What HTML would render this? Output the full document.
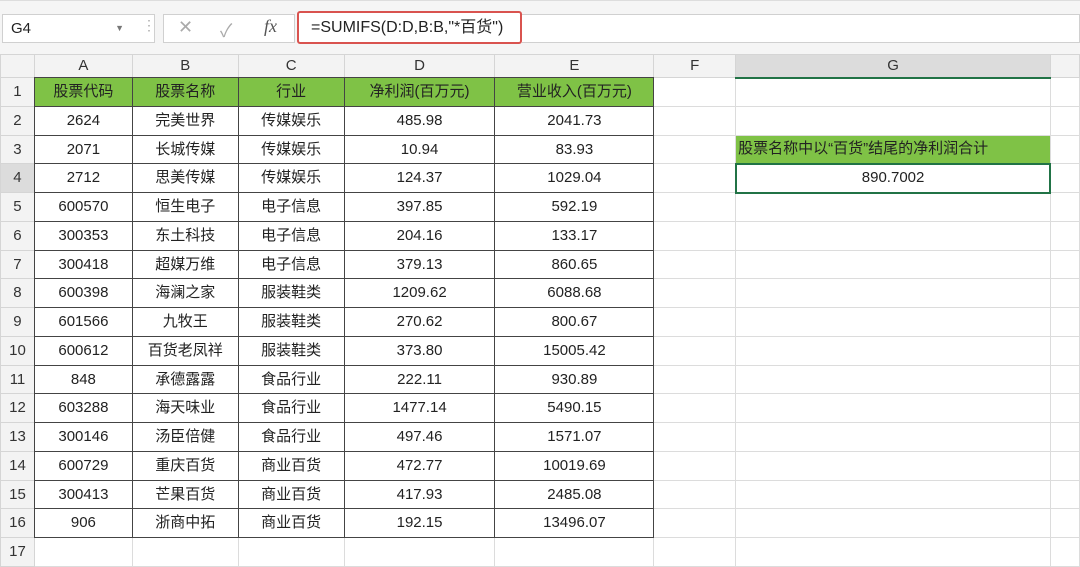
<!DOCTYPE html>
<html><head><meta charset="utf-8"><style>
body{margin:0;width:1080px;height:552px;overflow:hidden;background:#fff;font-family:"Liberation Sans","Noto Sans CJK SC",sans-serif;color:#222;position:relative}
.top{position:absolute;left:0;top:0;width:1080px;height:54px;background:#f5f5f5;border-top:1px solid #ddd}
.nb{position:absolute;left:2px;top:13px;width:153px;height:29px;background:#fff;border:1px solid #d0d0d0;box-sizing:border-box;font-size:15px;line-height:27px;padding-left:8px}
.nb span{position:absolute;right:30px;top:0;font-size:9px;color:#777}
.fxa{position:absolute;left:163px;top:13px;width:132px;height:29px;background:#fff;border:1px solid #d0d0d0;box-sizing:border-box;color:#aaa;font-size:18px}
.fb{position:absolute;left:297px;top:10px;width:225px;height:33px;background:#fff;border:2px solid #d9534f;border-radius:3px;box-sizing:border-box;font-size:16px;line-height:29px;padding-left:12px}
.rest{position:absolute;left:522px;top:13px;width:558px;height:29px;background:#fff;border:1px solid #d0d0d0;border-left:none;box-sizing:border-box}
table{position:absolute;left:0;top:54px;border-collapse:collapse;table-layout:fixed;font-size:15px}
td{border:1px solid #dcdcdc;text-align:center;padding:0;white-space:nowrap;overflow:hidden;line-height:18px}
tr{height:29px}
tr.s{height:28px}
tr.h{height:23px}
tr.h td{background:#f3f3f3;color:#333;font-size:15px;border-color:#d5d5d5}
td.r{background:#f3f3f3;color:#333;border-color:#d5d5d5}
td.d{border:1px double #444}
.g{background:#7fc246}
</style></head><body>
<div class="top">
<div class="nb">G4<span>▼</span></div>
<div style="position:absolute;left:142px;top:16px;color:#aaa;font-size:14px">⋮</div>
<div class="fxa"><span style="position:absolute;left:14px;top:2px">✕</span><span style="position:absolute;left:56px;top:2px">✓</span><span style="position:absolute;left:100px;top:1px;font-family:'Liberation Serif',serif;font-style:italic;color:#555">fx</span></div>
<div class="fb">=SUMIFS(D:D,B:B,"*百货")</div>
<div class="rest"></div>
</div>
<table>
<colgroup><col style="width:34px"><col style="width:98px"><col style="width:106px"><col style="width:106px"><col style="width:151px"><col style="width:159px"><col style="width:82px"><col style="width:315px"><col style="width:29px"></colgroup>
<tr class="h"><td></td><td>A</td><td>B</td><td>C</td><td>D</td><td>E</td><td>F</td><td style="background:#dcdcdc;border-bottom:2px solid #217346">G</td><td></td></tr>
<tr><td class="r">1</td><td class="d g">股票代码</td><td class="d g">股票名称</td><td class="d g">行业</td><td class="d g">净利润(百万元)</td><td class="d g">营业收入(百万元)</td><td></td><td></td><td></td></tr>
<tr><td class="r">2</td><td class="d">2624</td><td class="d">完美世界</td><td class="d">传媒娱乐</td><td class="d">485.98</td><td class="d">2041.73</td><td></td><td></td><td></td></tr>
<tr class="s"><td class="r">3</td><td class="d">2071</td><td class="d">长城传媒</td><td class="d">传媒娱乐</td><td class="d">10.94</td><td class="d">83.93</td><td></td><td class="g" style="text-align:left;padding-left:2px">股票名称中以“百货”结尾的净利润合计</td><td></td></tr>
<tr><td class="r" style="background:#dcdcdc">4</td><td class="d">2712</td><td class="d">思美传媒</td><td class="d">传媒娱乐</td><td class="d">124.37</td><td class="d">1029.04</td><td></td><td style="border:2px solid #217346">890.7002</td><td></td></tr>
<tr><td class="r">5</td><td class="d">600570</td><td class="d">恒生电子</td><td class="d">电子信息</td><td class="d">397.85</td><td class="d">592.19</td><td></td><td></td><td></td></tr>
<tr><td class="r">6</td><td class="d">300353</td><td class="d">东土科技</td><td class="d">电子信息</td><td class="d">204.16</td><td class="d">133.17</td><td></td><td></td><td></td></tr>
<tr class="s"><td class="r">7</td><td class="d">300418</td><td class="d">超媒万维</td><td class="d">电子信息</td><td class="d">379.13</td><td class="d">860.65</td><td></td><td></td><td></td></tr>
<tr><td class="r">8</td><td class="d">600398</td><td class="d">海澜之家</td><td class="d">服装鞋类</td><td class="d">1209.62</td><td class="d">6088.68</td><td></td><td></td><td></td></tr>
<tr><td class="r">9</td><td class="d">601566</td><td class="d">九牧王</td><td class="d">服装鞋类</td><td class="d">270.62</td><td class="d">800.67</td><td></td><td></td><td></td></tr>
<tr><td class="r">10</td><td class="d">600612</td><td class="d">百货老凤祥</td><td class="d">服装鞋类</td><td class="d">373.80</td><td class="d">15005.42</td><td></td><td></td><td></td></tr>
<tr class="s"><td class="r">11</td><td class="d">848</td><td class="d">承德露露</td><td class="d">食品行业</td><td class="d">222.11</td><td class="d">930.89</td><td></td><td></td><td></td></tr>
<tr><td class="r">12</td><td class="d">603288</td><td class="d">海天味业</td><td class="d">食品行业</td><td class="d">1477.14</td><td class="d">5490.15</td><td></td><td></td><td></td></tr>
<tr><td class="r">13</td><td class="d">300146</td><td class="d">汤臣倍健</td><td class="d">食品行业</td><td class="d">497.46</td><td class="d">1571.07</td><td></td><td></td><td></td></tr>
<tr><td class="r">14</td><td class="d">600729</td><td class="d">重庆百货</td><td class="d">商业百货</td><td class="d">472.77</td><td class="d">10019.69</td><td></td><td></td><td></td></tr>
<tr class="s"><td class="r">15</td><td class="d">300413</td><td class="d">芒果百货</td><td class="d">商业百货</td><td class="d">417.93</td><td class="d">2485.08</td><td></td><td></td><td></td></tr>
<tr><td class="r">16</td><td class="d">906</td><td class="d">浙商中拓</td><td class="d">商业百货</td><td class="d">192.15</td><td class="d">13496.07</td><td></td><td></td><td></td></tr>
<tr><td class="r">17</td><td></td><td></td><td></td><td></td><td></td><td></td><td></td><td></td></tr>
</table>
</body></html>
